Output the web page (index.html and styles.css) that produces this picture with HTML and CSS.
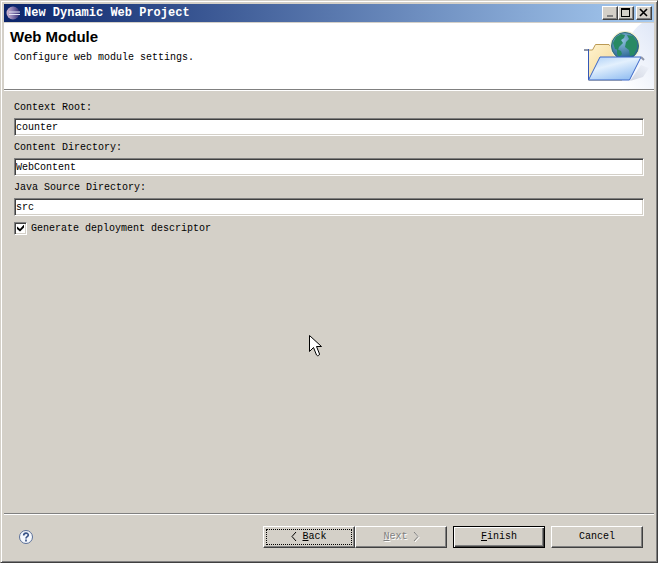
FILE: index.html
```html
<!DOCTYPE html>
<html lang="en">
<head>
  <meta charset="UTF-8">
  <meta name="viewport" content="width=device-width, initial-scale=1.0">
  <title>New Dynamic Web Project</title>
  <link rel="stylesheet" href="styles.css">
</head>
<body>
  <form class="window">
    <div class="titlebar">
      <svg class="app-icon" width="16" height="14" viewBox="0 0 16 14">
        <defs>
          <linearGradient id="planet" x1="0" y1="0" x2="1" y2="0">
            <stop offset="0" stop-color="#d3b9cf"/>
            <stop offset="0.5" stop-color="#8277ad"/>
            <stop offset="1" stop-color="#352d72"/>
          </linearGradient>
        </defs>
        <circle cx="7" cy="7" r="6.500" fill="url(#planet)"/>
        <path d="M3 6h11M3 8.500h11" stroke="#e2e6f6"/>
      </svg>
      <span class="title">New Dynamic Web Project</span>
      <div class="window-buttons">
        <button type="button" aria-label="Minimize">
          <svg width="12" height="10" shape-rendering="crispEdges"><path d="M3 7h6v2H3z" fill="#808080"/></svg>
        </button>
        <button type="button" aria-label="Maximize">
          <svg width="12" height="10" shape-rendering="crispEdges"><path d="M1 0h9v9H1zM2 2v6h7V2z" fill="#000" fill-rule="evenodd"/></svg>
        </button>
        <button type="button" aria-label="Close" class="close">
          <svg width="12" height="10"><path d="M2 1l7 7M9 1L2 8" stroke="#000" stroke-width="1.600"/></svg>
        </button>
      </div>
    </div>

    <div class="header">
      <div class="header-text">
        <h1>Web Module</h1>
        <p>Configure web module settings.</p>
      </div>
      <svg class="banner" width="74" height="66" viewBox="580 23 74 66">
        <defs>
          <linearGradient id="fade" x1="0" y1="1" x2="1" y2="0">
            <stop offset="0.2" stop-color="#fff"/>
            <stop offset="1" stop-color="#dfe7f7"/>
          </linearGradient>
          <linearGradient id="shade" x1="0" y1="1" x2="1" y2="0">
            <stop offset="0" stop-color="#b5bccd"/>
            <stop offset="1" stop-color="#eef2fa"/>
          </linearGradient>
          <linearGradient id="back" x1="0" y1="0" x2="1" y2="1">
            <stop offset="0" stop-color="#fff3cf"/>
            <stop offset="1" stop-color="#f0d28a"/>
          </linearGradient>
          <linearGradient id="front" x1="0" y1="0" x2="0.600" y2="1">
            <stop offset="0" stop-color="#a9cdf6"/>
            <stop offset="0.45" stop-color="#e3f0fd"/>
            <stop offset="1" stop-color="#9ac3f3"/>
          </linearGradient>
          <radialGradient id="sea" cx="0.4" cy="0.3" r="0.7">
            <stop offset="0" stop-color="#8cc0de"/>
            <stop offset="1" stop-color="#255f8e"/>
          </radialGradient>
        </defs>
        <path d="M654 23v66h-50c22-12 14-50 38-66z" fill="url(#fade)"/>
        <path d="M630 81l11-16 8 3-6 9z" fill="url(#shade)" opacity="0.6"/>
        <path d="M588.500 80V50h4l3-5.500h13.500l3 4H622v31.500z" fill="url(#back)" stroke="#bb9a55"/>
        <circle cx="625" cy="46" r="15" fill="#f3efcf"/>
        <circle cx="625" cy="46" r="13.500" fill="url(#sea)" stroke="#2f6d78"/>
        <path d="M613 43l3-6 5-3 4 1-1 3-3 2 2 3-4 4-1 3-3-1zM627 35l6 1 4 6v6l-3 7-4 1-1-6-4-3 1-5 3-3zM617 49l4 2 1 3-3 3-2-3z" fill="#288a63"/>
        <path d="M584 50h4" stroke="#8d95a8" stroke-width="2"/>
        <path d="M588.500 49v31" stroke="#3458b8"/>
        <path d="M588.500 80l11.500-23h41l-11.500 23z" fill="url(#front)" stroke="#3a66c8"/>
        <path d="M641 57l3 3" stroke="#8d95a8" stroke-width="2"/>
      </svg>
    </div>

    <div class="content">
      <label for="root">Context Root:</label>
      <input type="text" id="root" value="counter">
      <label for="content-dir">Content Directory:</label>
      <input type="text" id="content-dir" value="WebContent">
      <label for="source-dir">Java Source Directory:</label>
      <input type="text" id="source-dir" value="src">
      <div class="check-row">
        <input type="checkbox" id="descriptor" checked>
        <label for="descriptor">Generate deployment descriptor</label>
      </div>
    </div>

    <div class="footer">
      <button type="button" class="help" aria-label="Help">
        <svg width="16" height="16" viewBox="0 0 16 16">
          <circle cx="8" cy="8" r="6.500" fill="#f4f7fc" stroke="#5b7099"/>
          <path d="M5.700 6.500c0-3 4.600-3 4.600-.5 0 1.700-2.300 1.600-2.300 3.500M8 10.500v2" fill="none" stroke="#3a5488" stroke-width="1.700"/>
        </svg>
      </button>
      <div class="buttons">
        <div class="pair">
          <button type="button" class="push focused"><svg class="chevron" width="6" height="10"><path d="M5 0L1 4.500 5 9" fill="none" stroke="currentColor"/></svg><span><u>B</u>ack</span></button>
          <button type="button" class="push" disabled><span><u>N</u>ext</span><svg class="chevron" width="6" height="10"><path d="M1 0l4 4.500L1 9" fill="none" stroke="currentColor"/></svg></button>
        </div>
        <button type="submit" class="push default"><span><u>F</u>inish</span></button>
        <button type="button" class="push">Cancel</button>
      </div>
    </div>
  </form>

  <svg class="cursor" width="13" height="22" viewBox="0 0 13 22">
    <path d="M.5.5v16l4-4 3 7.500c1 1.500 3 .5 3-1L7.500 11.500h5z" fill="#fff" stroke="#000"/>
  </svg>
</body>
</html>
```

FILE: styles.css
```css
* {
  box-sizing: border-box;
}

body {
  margin: 0;
  background-color: #d4d0c8;
  color: #000;
  font: 10px/14px "Liberation Mono", monospace;
}

input, button {
  font: inherit;
  color: inherit;
}

.window {
  display: flex;
  flex-direction: column;
  min-height: 100vh;
  padding: 3px 2px 2px 3px;
  border: 1px solid;
  border-color: #d4d0c8 #404040 #404040 #d4d0c8;
  box-shadow: inset 1px 1px #fff, inset -1px -1px #808080;
}

/* Title bar */
.titlebar {
  display: flex;
  align-items: center;
  height: 18px;
  margin-right: 1px;
  padding: 0 2px;
  background: linear-gradient(to right, #0a246a, #a6caf0);
}

.title {
  flex: 1;
  margin-left: 2px;
  color: #fff;
  font-size: 12px;
  font-weight: bold;
}

.window-buttons {
  display: flex;
}

.window-buttons button {
  width: 16px;
  height: 14px;
  padding: 1px;
  border: 1px solid;
  border-color: #fff #404040 #404040 #fff;
  background-color: #d4d0c8;
  box-shadow: inset -1px -1px #808080;
}

.window-buttons svg {
  display: block;
}

.window-buttons .close {
  margin-left: 2px;
}

/* Wizard header */
.header {
  display: flex;
  justify-content: space-between;
  height: 68px;
  margin: 1px 1px 0 0;
  border-bottom: 1px solid #fff;
  background-color: #fff;
  box-shadow: inset 0 -1px #808080;
}

.header-text {
  padding: 5px 6px;
}

h1 {
  margin: 0;
  font: bold 15px/18px "Liberation Sans", Arial, sans-serif;
}

p {
  margin: 5px 0 0 4px;
}

/* Form */
.content {
  flex: 1;
  display: flex;
  flex-direction: column;
  padding: 5px 11px 5px 10px;
}

.content label {
  padding: 3px 0 1px;
  line-height: 18px;
}

.content input[type="text"] {
  width: 100%;
  height: 18px;
  padding: 0 1px;
  border: 1px solid;
  border-color: #808080 #fff #fff #808080;
  outline: none;
  background-color: #fff;
  box-shadow: inset 1px 1px #404040, inset -1px -1px #d4d0c8;
}

.check-row {
  display: flex;
  align-items: center;
  margin-top: 1px;
}

input[type="checkbox"] {
  appearance: none;
  width: 13px;
  height: 13px;
  margin: 0 4px 0 0;
  border: 1px solid;
  border-color: #808080 #fff #fff #808080;
  background-color: #fff;
  box-shadow: inset 1px 1px #404040, inset -1px -1px #d4d0c8;
}

input[type="checkbox"]:checked::before {
  content: "";
  display: block;
  width: 7px;
  height: 7px;
  margin: 2px;
  background-color: #000;
  clip-path: polygon(0 29%, 43% 66%, 100% 0, 100% 43%, 43% 100%, 0 66%);
}

/* Buttons */
.footer {
  display: flex;
  justify-content: space-between;
  align-items: center;
  height: 47px;
  margin-right: 1px;
  padding: 0 11px 0 14px;
  border-top: 1px solid #808080;
  box-shadow: inset 0 1px #fff;
}

.help {
  padding: 0;
  border: 0;
  background: none;
}

.help svg {
  display: block;
}

.buttons {
  display: flex;
  gap: 6px;
}

.pair {
  display: flex;
}

.push {
  position: relative;
  display: flex;
  justify-content: center;
  align-items: center;
  gap: 5px;
  width: 92px;
  height: 22px;
  padding: 0;
  border: 1px solid;
  border-color: #fff #404040 #404040 #fff;
  background-color: #d4d0c8;
  box-shadow: inset -1px -1px #808080;
}

.push:disabled {
  color: #808080;
  text-shadow: 1px 1px #fff;
}

.push:disabled .chevron {
  filter: drop-shadow(1px 1px 0 #fff);
}

.focused::after {
  content: "";
  position: absolute;
  inset: 2px;
  border: 1px dotted #000;
}

.default {
  border-color: #000;
  box-shadow: inset 1px 1px #fff, inset -1px -1px #404040, inset -2px -2px #808080;
}

/* Mouse pointer */
.cursor {
  position: absolute;
  left: 309px;
  top: 335px;
}
```
